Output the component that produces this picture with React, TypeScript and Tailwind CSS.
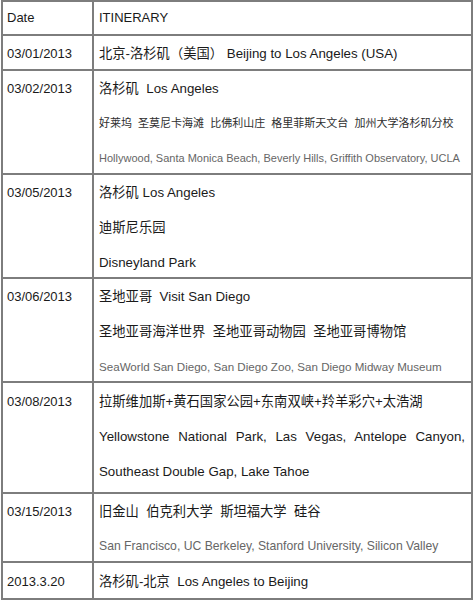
import React from 'react';

type Line = { text: string; kind?: 'main' | 'cn-small' | 'en-small' | 'justify'; size?: string };

type Row = { date: string; h: string; pad?: string; lines: Line[] };

const rows: Row[] = [
  {
    date: '03/01/2013',
    h: 'h-[35px]',
    lines: [{ text: '北京-洛杉矶（美国） Beijing to Los Angeles (USA)' }],
  },
  {
    date: '03/02/2013',
    h: 'h-[104px]',
    lines: [
      { text: '洛杉矶  Los Angeles' },
      { text: '好莱坞  圣莫尼卡海滩  比佛利山庄  格里菲斯天文台  加州大学洛杉矶分校', kind: 'cn-small' },
      {
        text: 'Hollywood, Santa Monica Beach, Beverly Hills, Griffith Observatory, UCLA',
        kind: 'en-small',
        size: 'text-[11px]',
      },
    ],
  },
  {
    date: '03/05/2013',
    h: 'h-[104px]',
    lines: [{ text: '洛杉矶 Los Angeles' }, { text: '迪斯尼乐园' }, { text: 'Disneyland Park' }],
  },
  {
    date: '03/06/2013',
    h: 'h-[104px]',
    lines: [
      { text: '圣地亚哥  Visit San Diego' },
      { text: '圣地亚哥海洋世界  圣地亚哥动物园  圣地亚哥博物馆' },
      {
        text: 'SeaWorld San Diego, San Diego Zoo, San Diego Midway Museum',
        kind: 'en-small',
        size: 'text-[11.6px]',
      },
    ],
  },
  {
    date: '03/08/2013',
    h: 'h-[111px]',
    pad: 'pt-[1px]',
    lines: [
      { text: '拉斯维加斯+黄石国家公园+东南双峡+羚羊彩穴+太浩湖' },
      { text: 'Yellowstone National Park, Las Vegas, Antelope Canyon,', kind: 'justify' },
      { text: 'Southeast Double Gap, Lake Tahoe' },
    ],
  },
  {
    date: '03/15/2013',
    h: 'h-[69px]',
    lines: [
      { text: '旧金山  伯克利大学  斯坦福大学  硅谷' },
      {
        text: 'San Francisco, UC Berkeley, Stanford University, Silicon Valley',
        kind: 'en-small',
        size: 'text-[12.2px]',
      },
    ],
  },
  {
    date: '2013.3.20',
    h: 'h-[35px]',
    pad: 'pt-[1px]',
    lines: [{ text: '洛杉矶-北京  Los Angeles to Beijing' }],
  },
];

function LineText({ line }: { line: Line }) {
  if (line.kind === 'cn-small') {
    return <div className="h-[35px] leading-[35px] text-[11px] text-[#2e2e2e]">{line.text}</div>;
  }
  if (line.kind === 'en-small') {
    return <div className={`h-[35px] leading-[35px] ${line.size} text-[#666]`}>{line.text}</div>;
  }
  if (line.kind === 'justify') {
    return (
      <div className="h-[35px] leading-[35px] text-[13.3px] text-justify [text-align-last:justify]">
        {line.text}
      </div>
    );
  }
  return <div className="h-[35px] leading-[35px] text-[13.3px]">{line.text}</div>;
}

export default function App() {
  return (
    <div
      className="w-[473px] h-[600px] bg-white text-[#1a1a1a] whitespace-pre"
      style={{ fontFamily: '"Liberation Sans", Arial, "Noto Sans CJK SC", sans-serif' }}
    >
      <div className="ml-px w-[472px] border-2 border-[#7d7d7d]">
        {/* header */}
        <div className="flex h-[34px] border-b-2 border-[#7d7d7d] text-[13px]">
          <div className="w-[91px] shrink-0 border-r-2 border-[#7d7d7d] pl-1 leading-[32px]">Date</div>
          <div className="flex-1 pl-[5px] leading-[32px]">ITINERARY</div>
        </div>

        {rows.map((row, i) => (
          <div
            key={row.date}
            className={`flex ${row.h} ${i < rows.length - 1 ? 'border-b-2 border-[#7d7d7d]' : ''}`}
          >
            <div className={`w-[91px] shrink-0 border-r-2 border-[#7d7d7d] pl-1 ${row.pad ?? ''}`}>
              <div className="h-[35px] leading-[35px] text-[13px]">{row.date}</div>
            </div>
            <div className={`flex-1 min-w-0 pl-[5px] pr-[6px] ${row.pad ?? ''}`}>
              {row.lines.map((line, j) => (
                <LineText key={j} line={line} />
              ))}
            </div>
          </div>
        ))}
      </div>
    </div>
  );
}
